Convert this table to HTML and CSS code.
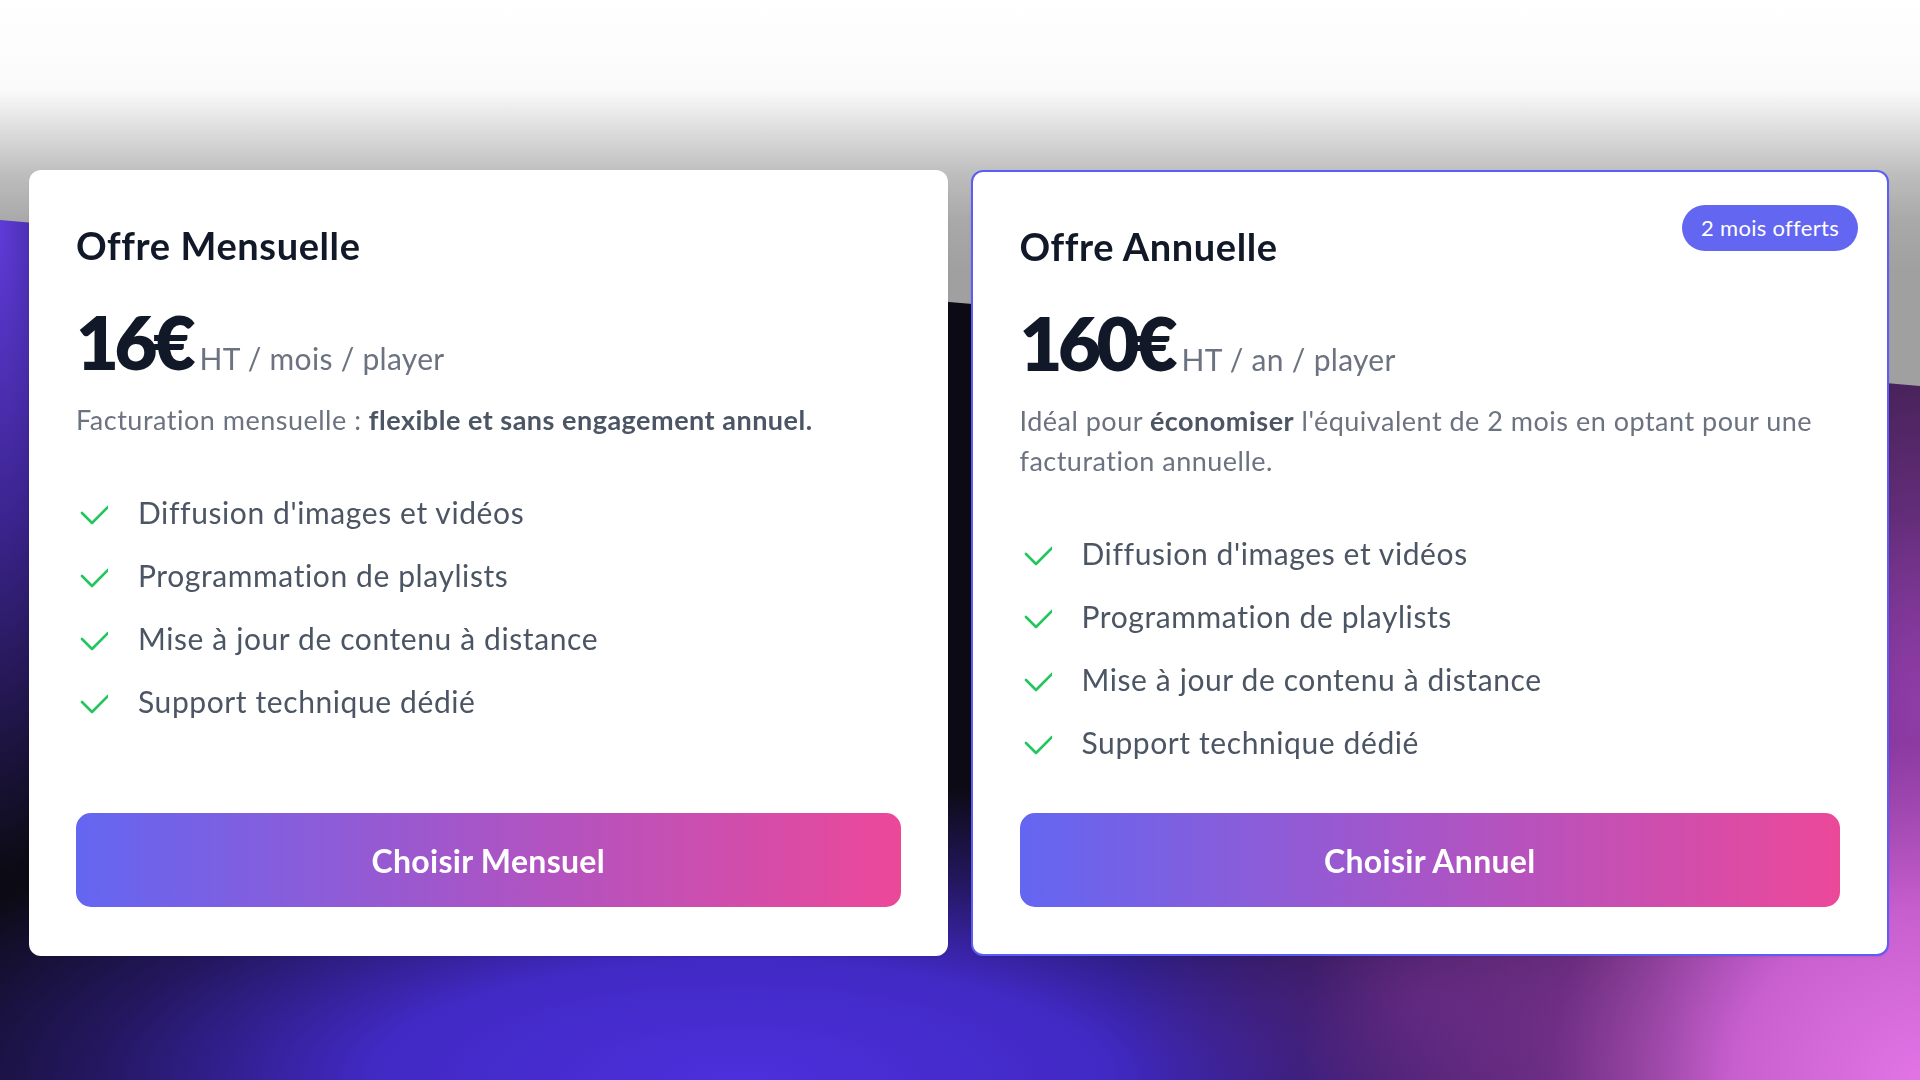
FILE: index.html
```html
<!DOCTYPE html>
<html lang="fr">
<head>
    <meta charset="UTF-8">
    <meta name="viewport" content="width=device-width, initial-scale=1.0">
    <title>Tarifs</title>
    <link rel="stylesheet" href="styles.css">
</head>
<body>
    <div class="backdrop"></div>

    <div class="pricing">
        <!-- Offre mensuelle -->
        <div class="card">
            <h2 class="card-title">Offre Mensuelle</h2>
            <div class="price">
                <span class="amount">16€</span>
                <span class="period">HT / mois / player</span>
            </div>
            <p class="desc">Facturation mensuelle : <strong>flexible et sans engagement annuel.</strong></p>
            <ul class="features">
                <li><svg class="check" viewBox="0 0 32 24"><path d="M6 12l10 10L32 6"/></svg>Diffusion d'images et vidéos</li>
                <li><svg class="check" viewBox="0 0 32 24"><path d="M6 12l10 10L32 6"/></svg>Programmation de playlists</li>
                <li><svg class="check" viewBox="0 0 32 24"><path d="M6 12l10 10L32 6"/></svg>Mise à jour de contenu à distance</li>
                <li><svg class="check" viewBox="0 0 32 24"><path d="M6 12l10 10L32 6"/></svg>Support technique dédié</li>
            </ul>
            <a href="#" class="btn">Choisir Mensuel</a>
        </div>

        <!-- Offre annuelle -->
        <div class="card card-featured">
            <span class="badge">2 mois offerts</span>
            <h2 class="card-title">Offre Annuelle</h2>
            <div class="price">
                <span class="amount">160€</span>
                <span class="period">HT / an / player</span>
            </div>
            <p class="desc">Idéal pour <strong>économiser</strong> l'équivalent de 2 mois en optant pour une facturation annuelle.</p>
            <ul class="features">
                <li><svg class="check" viewBox="0 0 32 24"><path d="M6 12l10 10L32 6"/></svg>Diffusion d'images et vidéos</li>
                <li><svg class="check" viewBox="0 0 32 24"><path d="M6 12l10 10L32 6"/></svg>Programmation de playlists</li>
                <li><svg class="check" viewBox="0 0 32 24"><path d="M6 12l10 10L32 6"/></svg>Mise à jour de contenu à distance</li>
                <li><svg class="check" viewBox="0 0 32 24"><path d="M6 12l10 10L32 6"/></svg>Support technique dédié</li>
            </ul>
            <a href="#" class="btn">Choisir Annuel</a>
        </div>
    </div>
</body>
</html>
```

FILE: styles.css
```css
body {
    font-family: 'Lato', 'Noto Sans', sans-serif;
    margin: 0;
    min-height: 100vh;
    overflow: hidden;
    background: linear-gradient(to bottom, #ffffff 0, #fafafa 90px, #d6d6d6 140px, #bdbdbd 175px, #a9a9a9 220px, #a0a0a0 270px);
}

/* fond sombre en biais derrière les cartes */
.backdrop {
    position: fixed;
    inset: 0;
    z-index: 0;
    clip-path: polygon(0 220px, 100% 386px, 100% 100%, 0 100%);
    background:
        radial-gradient(ellipse 620px 560px at 100% 100%, #e274e6 0%, #c85fcf 30%, rgba(150, 60, 170, 0.6) 60%, rgba(90, 30, 90, 0) 100%),
        radial-gradient(ellipse 300px 200px at 1420px 1000px, rgba(100, 40, 130, 0.7) 0%, rgba(60, 20, 70, 0) 100%),
        radial-gradient(ellipse 920px 300px at 740px 100%, #4c30dc 0%, #4129c4 40%, rgba(60, 35, 170, 0.5) 70%, rgba(20, 14, 40, 0) 100%),
        radial-gradient(ellipse 130px 640px at 0 230px, #5e3bd8 0%, #3c2490 45%, rgba(30, 20, 50, 0) 100%),
        radial-gradient(ellipse 300px 620px at 100% 700px, rgba(150, 65, 180, 0.9) 0%, rgba(70, 30, 100, 0) 100%),
        #0c0b15;
}

.pricing {
    position: relative;
    z-index: 1;
    display: grid;
    grid-template-columns: 1fr 1fr;
    gap: 23px;
    padding: 170px 31px 0 29px;
    align-items: stretch;
}

.card {
    position: relative;
    display: flex;
    flex-direction: column;
    background: #ffffff;
    border-radius: 12px;
    padding: 52px 47px 49px;
    box-shadow: 0 1px 2px rgba(0, 0, 0, 0.08);
}

.card-featured {
    border: 2px solid #5b5ef4;
    padding: 51px 47px 47px;
}

.badge {
    position: absolute;
    top: 33px;
    right: 29px;
    background: #6366f1;
    color: #ffffff;
    font-size: 22px;
    letter-spacing: 0.3px;
    line-height: 32px;
    padding: 7px 19px;
    border-radius: 999px;
}

.card-title {
    margin: 0;
    font-size: 38px;
    line-height: 46px;
    font-weight: 700;
    color: #111827;
    letter-spacing: 0.6px;
}

.price {
    margin-top: 38px;
    display: flex;
    align-items: baseline;
    gap: 8px;
}

.amount {
    font-size: 74px;
    line-height: 72px;
    font-weight: 800;
    color: #111827;
    letter-spacing: -0.06em;
}

.period {
    font-size: 30px;
    letter-spacing: 0.3px;
    color: #6b7280;
}

.desc {
    margin: 22px 0 0;
    font-size: 27px;
    letter-spacing: 0.5px;
    line-height: 40px;
    color: #6b7280;
}

.desc strong {
    color: #4b5563;
    font-weight: 700;
}

.features {
    list-style: none;
    margin: 50px 0 48px;
    padding: 0;
    display: flex;
    flex-direction: column;
    gap: 18px;
}

.features li {
    display: flex;
    align-items: center;
    gap: 30px;
    font-size: 30px;
    letter-spacing: 0.6px;
    line-height: 45px;
    color: #4b5563;
}

.check {
    width: 32px;
    height: 24px;
    flex-shrink: 0;
    fill: none;
    stroke: #22c55e;
    stroke-width: 2.6;
    stroke-linecap: round;
    stroke-linejoin: round;
}

.btn {
    margin-top: auto;
    display: flex;
    justify-content: center;
    align-items: center;
    height: 94px;
    border-radius: 15px;
    background: linear-gradient(90deg, #6366f1 0%, #a855c7 50%, #ec4899 100%);
    color: #ffffff;
    font-size: 32px;
    letter-spacing: 0.3px;
    font-weight: 700;
    text-decoration: none;
}
```
